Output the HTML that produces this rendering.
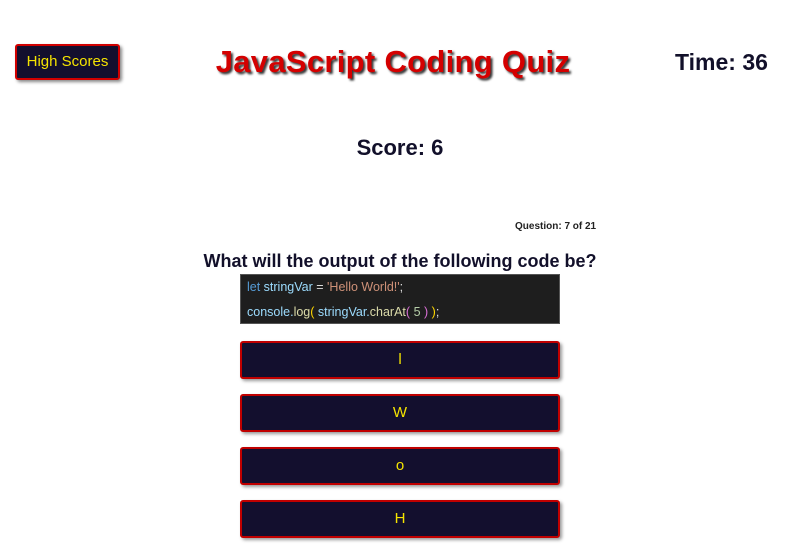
<!DOCTYPE html>
<html><head><style>
body{margin:0;width:800px;height:545px;background:#fff;font-family:"Liberation Sans",Arial,sans-serif;position:relative;overflow:hidden;color:#12102a}
.hs{position:absolute;left:15px;top:44px;width:101px;height:32px;background:#130f2e;border:2px solid #d10000;border-radius:3px;box-shadow:2px 2px 3px #888;color:#f5e400;font-size:15px;line-height:32px;text-align:center}
.title{position:absolute;left:0;width:786px;top:44px;text-align:center;font-size:31px;letter-spacing:0.3px;font-weight:bold;color:#d40000;text-shadow:2px 2px 2px #333;line-height:36px}
.time{position:absolute;left:675px;top:49px;font-size:23px;font-weight:bold}
.score{position:absolute;left:0;width:800px;top:135px;text-align:center;font-size:22px;font-weight:bold}
.qn{position:absolute;left:515px;top:221px;font-size:10px;font-weight:bold;color:#222}
.q{position:absolute;left:0;width:800px;top:251px;text-align:center;font-size:18px;font-weight:bold}
.code{position:absolute;left:240px;top:274px;width:320px;height:50px;background:#1e1e1e;box-sizing:border-box;border:1px solid #555;font-size:12.5px;color:#9cdcfe;padding-left:6px}
.code div{position:absolute;left:6px}
.btn{position:absolute;left:240px;width:316px;height:34px;background:#130f2e;border:2px solid #c00000;border-radius:3px;box-shadow:2px 2px 3px #999;color:#f5e400;font-size:15px;line-height:34px;text-align:center}
</style></head><body>
<div class="hs">High Scores</div>
<div class="title">JavaScript Coding Quiz</div>
<div class="time">Time: 36</div>
<div class="score">Score: 6</div>
<div class="qn">Question: 7 of 21</div>
<div class="q">What will the output of the following code be?</div>
<div class="code">
<div style="top:5px"><span style="color:#569cd6">let</span> stringVar <span style="color:#ddd">=</span> <span style="color:#ce9178">'Hello World!'</span><span style="color:#ddd">;</span></div>
<div style="top:30px">console.<span style="color:#dcdcaa">log</span><span style="color:#ffd700">(</span> stringVar.<span style="color:#dcdcaa">charAt</span><span style="color:#da70d6">(</span> <span style="color:#b5cea8">5</span> <span style="color:#da70d6">)</span> <span style="color:#ffd700">)</span><span style="color:#ddd">;</span></div>
</div>
<div class="btn" style="top:341px">l</div>
<div class="btn" style="top:394px">W</div>
<div class="btn" style="top:447px">o</div>
<div class="btn" style="top:500px">H</div>
</body></html>
